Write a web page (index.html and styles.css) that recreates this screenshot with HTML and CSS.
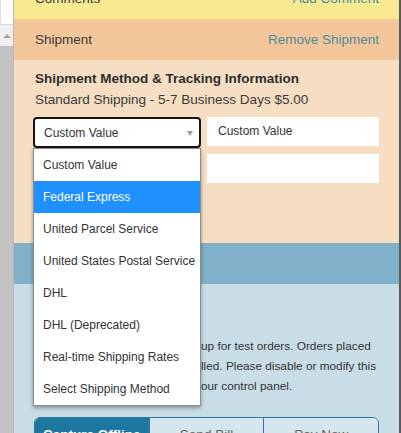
FILE: index.html
```html
<!DOCTYPE html>
<html>
<head>
<meta charset="utf-8">
<link rel="stylesheet" href="styles.css">
</head>
<body>
<div class="frame">
  <div class="gutter">
    <div class="gut-top"></div>
    <div class="scroll-btn"><span class="up-arrow"></span></div>
    <div class="scroll-track"></div>
  </div>
  <div class="panel">
    <section class="bar comments">
      <span class="bar-title">Comments</span>
      <a class="bar-link">Add Comment</a>
    </section>
    <section class="bar shipment">
      <span class="bar-title">Shipment</span>
      <a class="bar-link">Remove Shipment</a>
    </section>
    <section class="ship-body">
      <h3 class="ship-heading">Shipment Method &amp; Tracking Information</h3>
      <p class="ship-sub">Standard Shipping - 5-7 Business Days $5.00</p>
      <div class="fields">
        <div class="col-left">
          <div class="select">
            <span>Custom Value</span>
            <span class="select-arrow"></span>
          </div>
          <ul class="dropdown">
            <li>Custom Value</li>
            <li class="active">Federal Express</li>
            <li>United Parcel Service</li>
            <li>United States Postal Service</li>
            <li>DHL</li>
            <li>DHL (Deprecated)</li>
            <li>Real-time Shipping Rates</li>
            <li>Select Shipping Method</li>
          </ul>
        </div>
        <div class="col-right">
          <div class="input">Custom Value</div>
          <div class="input"></div>
        </div>
      </div>
    </section>
    <section class="bar payment">
      <span class="bar-title">Payment</span>
    </section>
    <section class="pay-body">
      <h4 class="pay-heading">Test Payment Gateway</h4>
      <p class="pay-text">
        <span class="line"><span class="hid">This gateway is only set </span>up for test orders. Orders placed</span>
        <span class="line"><span class="hid">with it will not be bi</span>lled. Please disable or modify this</span>
        <span class="line"><span class="hid">payment method in y</span>our control panel.</span>
      </p>
      <div class="btn-group">
        <button class="btn primary">Capture Offline</button>
        <button class="btn">Send Bill</button>
        <button class="btn">Pay Now</button>
      </div>
    </section>
  </div>
  <div class="edge"></div>
</div>
</body>
</html>
```

FILE: styles.css
```css
* { box-sizing: border-box; }
html, body {
  margin: 0;
  padding: 0;
  width: 401px;
  height: 433px;
  overflow: hidden;
  background: #ffffff;
  font-family: "Liberation Sans", Arial, sans-serif;
  color: #333333;
}
.frame {
  display: flex;
  width: 401px;
  height: 433px;
  overflow: hidden;
}
.gutter {
  width: 14px;
  flex: none;
  display: flex;
  flex-direction: column;
  border-right: 1px solid #b9b9b9;
}
.gut-top {
  height: 25px;
  background: #ffffff;
  border-left: 1px solid #dddddd;
  border-bottom: 1px solid #d6d6d6;
}
.scroll-btn {
  height: 21px;
  background: #f0f0f0;
  display: flex;
  align-items: center;
  justify-content: center;
}
.up-arrow {
  width: 0;
  height: 0;
  border-left: 4px solid transparent;
  border-right: 4px solid transparent;
  border-bottom: 4px solid #a3a3a3;
}
.scroll-track {
  flex: 1;
  background: #c2c2c2;
}
.panel {
  width: 385px;
  flex: none;
  margin-top: -22px;
  display: flex;
  flex-direction: column;
}
.edge {
  width: 2px;
  flex: none;
  background: #595959;
}
.bar {
  height: 41px;
  flex: none;
  display: flex;
  align-items: center;
  justify-content: space-between;
  padding: 0 20px 0 21px;
  font-size: 13.5px;
}
.bar-title { color: #3a3a3a; }
.bar-link { color: #4c8a9c; cursor: pointer; }
.comments { background: #f8ea91; }
.shipment { background: #f4c79b; }
.payment { background: #81b0ca; color: #ffffff; }
.payment .bar-title { color: #ffffff; font-weight: bold; }
.ship-body {
  height: 183px;
  flex: none;
  background: #f6dec3;
  padding: 10px 20px 0 21px;
}
.ship-heading {
  margin: 0;
  font-size: 13.5px;
  line-height: 18px;
  font-weight: bold;
  color: #2e2e2e;
}
.ship-sub {
  margin: 3px 0 0;
  font-size: 13.5px;
  line-height: 18px;
  color: #3a3a3a;
}
.fields {
  display: flex;
  gap: 6px;
  margin: 8px 0 0 -2px;
}
.col-left {
  position: relative;
  width: 168px;
  flex: none;
}
.select {
  height: 31px;
  border: 2px solid #161616;
  border-radius: 4px;
  background: #ffffff;
  display: flex;
  align-items: center;
  justify-content: space-between;
  padding: 0 6px 0 9px;
  font-size: 12px;
  color: #333333;
}
.select-arrow {
  width: 0;
  height: 0;
  border-left: 3px solid transparent;
  border-right: 3px solid transparent;
  border-top: 5px solid #9a9a9a;
  margin-top: 1px;
}
.dropdown {
  position: absolute;
  top: 31px;
  left: 0;
  width: 168px;
  margin: 0;
  padding: 0;
  list-style: none;
  background: #ffffff;
  border: 1px solid #8c8c8c;
  box-shadow: 0 2px 4px rgba(0, 0, 0, 0.35);
  z-index: 10;
}
.dropdown li {
  height: 32px;
  line-height: 32px;
  padding-left: 9px;
  font-size: 12px;
  color: #333333;
  white-space: nowrap;
}
.dropdown li.active {
  background: #1e90ff;
  color: #ffffff;
}
.col-right {
  flex: 1;
  display: flex;
  flex-direction: column;
  gap: 8px;
}
.input {
  height: 29px;
  background: #ffffff;
  padding: 0 11px;
  font-size: 12px;
  line-height: 28px;
  color: #333333;
}
.pay-body {
  flex: 1;
  background: #c9dde7;
  padding: 16px 20px 0 20px;
}
.pay-heading {
  margin: 0 0 18px 1px;
  font-size: 13.5px;
  line-height: 18px;
  color: #333333;
}
.pay-text {
  margin: 0 0 21px 1px;
  font-size: 11.8px;
  line-height: 20px;
  color: #333333;
}
.line {
  display: block;
  white-space: nowrap;
}
.hid {
  display: inline-block;
  width: 166px;
  overflow: hidden;
  white-space: nowrap;
  vertical-align: top;
}
.btn-group {
  display: flex;
  border: 1px solid #2a7aa0;
  border-radius: 6px;
  overflow: hidden;
  height: 34px;
}
.btn {
  flex: 1;
  border: 0;
  border-left: 1px solid #2a7aa0;
  background: #d6e6ee;
  color: #666666;
  font-family: "Liberation Sans", Arial, sans-serif;
  font-size: 13.5px;
  padding: 0;
}
.btn:first-child { border-left: 0; }
.btn.primary {
  background: #1e77a0;
  color: #ffffff;
  font-weight: bold;
}
```
